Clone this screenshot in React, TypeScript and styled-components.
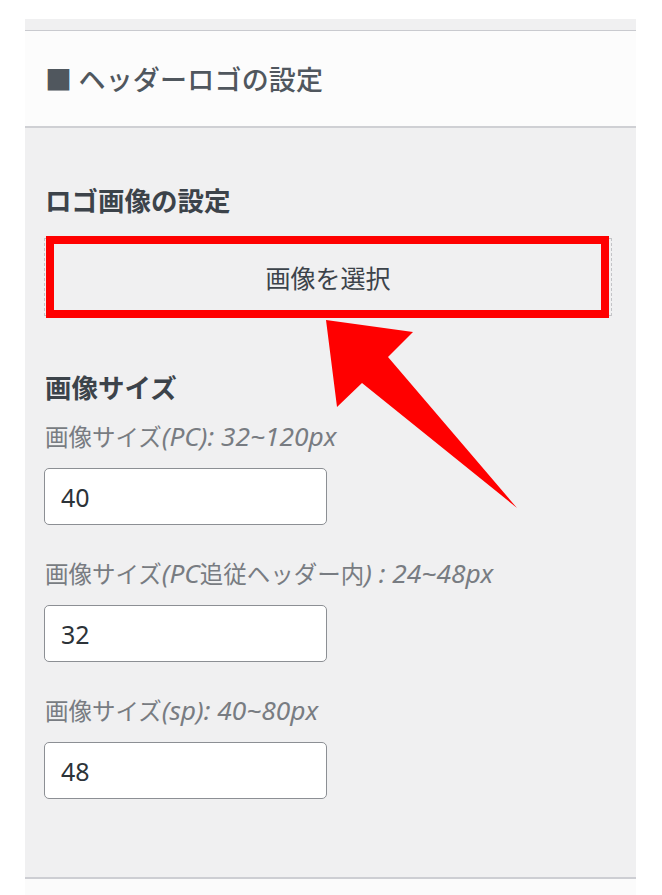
import React from "react";
import styled, { createGlobalStyle } from "styled-components";

const GlobalStyle = createGlobalStyle`
  body {
    margin: 0;
    background: #ffffff;
    font-family: "Noto Sans", "Noto Sans CJK JP", sans-serif;
  }
`;

const Page = styled.div`
  padding: 19px 0 0 25px;
  width: 611px;
`;

const Panel = styled.section`
  display: flex;
  flex-direction: column;
`;

const TopStrip = styled.div`
  height: 11px;
  background: #f0f0f1;
  border-bottom: 1px solid #c9cacf;
`;

const SectionHeader = styled.h2`
  margin: 0;
  height: 95px;
  display: flex;
  align-items: center;
  padding-left: 20px;
  background: #fcfcfc;
  border-bottom: 2px solid #cfd0d4;
  font-family: "Noto Sans CJK JP", sans-serif;
  font-size: 27px;
  font-weight: 500;
  color: #50575e;
  letter-spacing: 0.2px;
`;

const Body = styled.div`
  position: relative;
  display: flex;
  flex-direction: column;
  background: #f0f0f1;
  padding: 54px 24px 78px 19px;
  border-bottom: 2px solid #cdced3;
`;

const Footer = styled.div`
  height: 20px;
  background: #fbfbfb;
`;

const Heading = styled.h3<{ $gap?: number }>`
  margin: ${(p) => p.$gap ?? 0}px 0 0 1px;
  font-family: "Noto Sans CJK JP", sans-serif;
  font-size: 26.5px;
  line-height: 36px;
  font-weight: 700;
  color: #3c434a;
`;

const ButtonWrap = styled.div`
  position: relative;
  margin-top: 20px;
`;

const SelectButton = styled.button`
  width: 100%;
  height: 78px;
  display: flex;
  align-items: center;
  justify-content: center;
  background: transparent;
  border: 1px dashed #c3c4c7;
  font-family: "Noto Sans CJK JP", sans-serif;
  font-size: 25px;
  color: #3c434a;
  cursor: pointer;
`;

const Highlight = styled.div`
  position: absolute;
  top: -2px;
  bottom: -2px;
  left: 2px;
  right: 3px;
  border: 8px solid #ff0000;
  pointer-events: none;
`;

const Arrow = styled.svg`
  position: absolute;
  left: 300px;
  top: 190px;
  width: 200px;
  height: 195px;
  pointer-events: none;
`;

const Field = styled.div<{ $first?: boolean }>`
  display: flex;
  flex-direction: column;
  margin-top: ${(p) => (p.$first ? 17 : 34)}px;
`;

const Label = styled.label`
  margin-left: 1px;
  font-size: 23.5px;
  line-height: 30px;
  color: #787c82;
  white-space: nowrap;
`;

const Em = styled.em`
  font-family: "Noto Sans", sans-serif;
  font-style: italic;
  font-size: 1.12em;
  line-height: 1;
`;

const NumberInput = styled.input`
  margin-top: 16px;
  box-sizing: border-box;
  width: 283px;
  height: 57px;
  padding: 0 16px;
  border: 1px solid #8c8f94;
  border-radius: 5px;
  background: #ffffff;
  font-family: "Noto Sans", sans-serif;
  font-size: 25px;
  color: #2c3338;
  outline: none;
`;

const fields = [
  { pre: "画像サイズ", latin: ["(PC): 32~120px"], value: "40" },
  { pre: "画像サイズ", latin: ["(PC", ") : 24~48px"], mid: "追従ヘッダー内", value: "32" },
  { pre: "画像サイズ", latin: ["(sp): 40~80px"], value: "48" },
];

export default function App() {
  return (
    <Page>
      <GlobalStyle />
      <Panel>
        <TopStrip />
        <SectionHeader>■ ヘッダーロゴの設定</SectionHeader>
        <Body>
          <Heading>ロゴ画像の設定</Heading>
          <ButtonWrap>
            <SelectButton type="button">画像を選択</SelectButton>
            <Highlight />
          </ButtonWrap>

          <Heading $gap={53}>画像サイズ</Heading>
          {fields.map((f, i) => (
            <Field key={i} $first={i === 0}>
              <Label>
                {f.pre}
                <Em>{f.latin[0]}</Em>
                {f.mid}
                {f.latin[1] && <Em>{f.latin[1]}</Em>}
              </Label>
              <NumberInput type="text" defaultValue={f.value} />
            </Field>
          ))}

          <Arrow viewBox="0 0 200 195">
            <polygon
              points="1,2 88,14 63,39 192,190 37,65 12,89"
              fill="#ff0000"
            />
          </Arrow>
        </Body>
        <Footer />
      </Panel>
    </Page>
  );
}
